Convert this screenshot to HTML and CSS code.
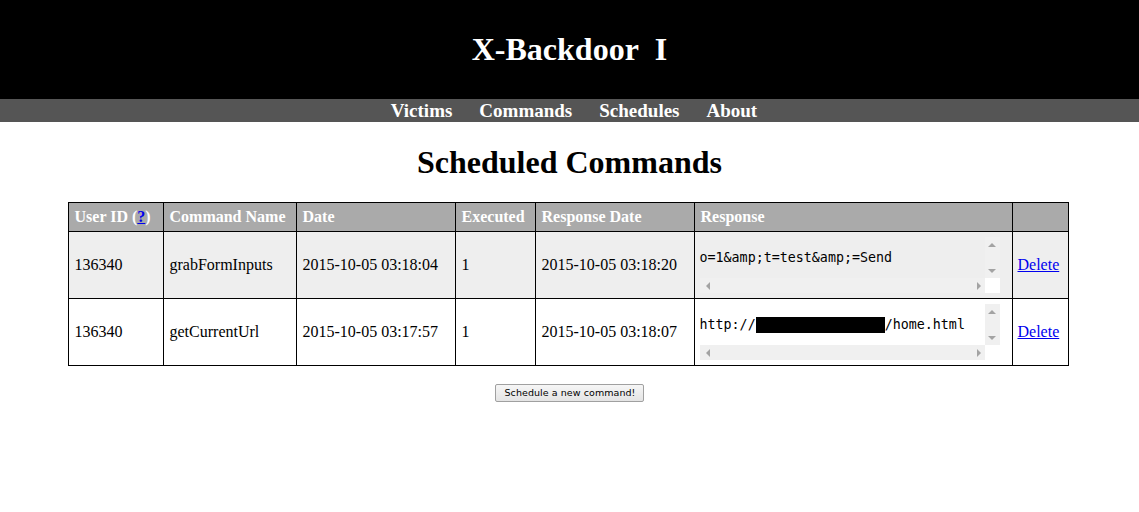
FILE: index.html
```html
<!DOCTYPE html>
<html>
<head>
<meta charset="utf-8">
<title>X-Backdoor I</title>
<link rel="stylesheet" href="styles.css">
</head>
<body>
<div class="header"><h1 class="title">X-Backdoor&nbsp; I</h1></div>
<div class="nav">
  <a href="#">Victims</a>
  <a href="#">Commands</a>
  <a href="#">Schedules</a>
  <a href="#">About</a>
</div>
<h2 class="page-title">Scheduled Commands</h2>
<div class="table-wrap">
<table class="grid">
  <colgroup>
    <col class="c1"><col class="c2"><col class="c3"><col class="c4"><col class="c5"><col class="c6"><col class="c7">
  </colgroup>
  <thead>
    <tr>
      <th>User ID (<a class="help" href="#">?</a>)</th>
      <th>Command Name</th>
      <th>Date</th>
      <th>Executed</th>
      <th>Response Date</th>
      <th>Response</th>
      <th></th>
    </tr>
  </thead>
  <tbody>
    <tr class="odd">
      <td>136340</td>
      <td>grabFormInputs</td>
      <td>2015-10-05 03:18:04</td>
      <td>1</td>
      <td>2015-10-05 03:18:20</td>
      <td class="resp">
        <div class="response-box">
          <div class="response-line">o=1&amp;amp;t=test&amp;amp;=Send</div>
          <div class="vbar"><span class="arr up"></span><span class="arr down"></span></div>
          <div class="hbar"><span class="arr left"></span><span class="arr right"></span></div>
          <div class="corner"></div>
        </div>
      </td>
      <td class="del-cell"><a class="del" href="#">Delete</a></td>
    </tr>
    <tr>
      <td>136340</td>
      <td>getCurrentUrl</td>
      <td>2015-10-05 03:17:57</td>
      <td>1</td>
      <td>2015-10-05 03:18:07</td>
      <td class="resp">
        <div class="response-box">
          <div class="response-line">http://<span class="redact"></span>/home.html</div>
          <div class="vbar"><span class="arr up"></span><span class="arr down"></span></div>
          <div class="hbar"><span class="arr left"></span><span class="arr right"></span></div>
          <div class="corner"></div>
        </div>
      </td>
      <td class="del-cell"><a class="del" href="#">Delete</a></td>
    </tr>
  </tbody>
</table>
</div>
<div class="actions"><button class="btn" type="button">Schedule a new command!</button></div>
</body>
</html>
```

FILE: styles.css
```css
html, body {
  margin: 0;
  padding: 0;
  background: #fff;
  font-family: "Liberation Serif", "Times New Roman", serif;
  font-size: 16px;
  color: #000;
}

.header {
  background: #000;
  height: 99px;
  display: flex;
  align-items: center;
  justify-content: center;
}

.title {
  margin: 0;
  color: #fff;
  font-size: 32px;
  font-weight: bold;
  line-height: 1;
  padding-bottom: 2px;
}

.nav {
  background: #555;
  height: 23px;
  display: flex;
  justify-content: center;
  align-items: center;
  gap: 27px;
  padding-left: 9px;
}

.nav a {
  color: #fff;
  font-weight: bold;
  font-size: 19px;
  text-decoration: none;
  line-height: 23px;
}

.page-title {
  margin: 23px 0 22px;
  text-align: center;
  font-size: 32px;
  font-weight: bold;
  line-height: 35px;
}

.table-wrap {
  padding-right: 3px;
}

.grid {
  width: 1000px;
  margin: 0 auto;
  border-collapse: collapse;
  table-layout: fixed;
  border: 1px solid #000;
}

.c1 { width: 95px; }
.c2 { width: 133px; }
.c3 { width: 159px; }
.c4 { width: 80px; }
.c5 { width: 159px; }
.c6 { width: 318px; }
.c7 { width: 56px; }

.grid th {
  background: #aaa;
  color: #fff;
  font-weight: bold;
  text-align: left;
  height: 29px;
  padding: 0 5px 0 6px;
  border: 1px solid #000;
  box-sizing: border-box;
}

.grid td {
  height: 67px;
  padding: 0 5px 0 6px;
  border: 1px solid #000;
  box-sizing: border-box;
  vertical-align: middle;
}

.grid tr.odd td {
  background: #eee;
}

.help {
  color: #00e;
  text-decoration: underline;
}

.grid td.resp {
  padding-left: 5px;
}

.grid td.del-cell {
  padding-left: 5px;
}

.response-box {
  width: 300px;
  height: 56px;
  display: grid;
  grid-template-columns: 285px 15px;
  grid-template-rows: 41px 15px;
}

.response-line {
  font-family: "DejaVu Sans Mono", monospace;
  font-size: 13.333px;
  line-height: 16px;
  padding-top: 13px;
  white-space: pre;
  display: flex;
  align-items: flex-start;
}

.redact {
  display: inline-block;
  width: 129px;
  height: 16px;
  background: #000;
}

.vbar {
  background: #f0f0f0;
  display: flex;
  flex-direction: column;
  align-items: center;
  justify-content: space-between;
  padding: 6px 0 5px;
}

.hbar {
  background: #f0f0f0;
  display: flex;
  align-items: center;
  justify-content: space-between;
  padding: 0 4px 0 6px;
}

.corner {
  background: #fff;
}

.arr {
  display: block;
  width: 0;
  height: 0;
}

.arr.up {
  border-left: 4px solid transparent;
  border-right: 4px solid transparent;
  border-bottom: 4px solid #a3a3a3;
}

.arr.down {
  border-left: 4px solid transparent;
  border-right: 4px solid transparent;
  border-top: 4px solid #a3a3a3;
}

.arr.left {
  border-top: 4px solid transparent;
  border-bottom: 4px solid transparent;
  border-right: 4px solid #a3a3a3;
}

.arr.right {
  border-top: 4px solid transparent;
  border-bottom: 4px solid transparent;
  border-left: 4px solid #a3a3a3;
}

.del {
  color: #00e;
  text-decoration: underline;
}

.actions {
  text-align: center;
  margin-top: 16px;
}

.btn {
  font-family: "DejaVu Sans", Verdana, sans-serif;
  font-size: 9.5px;
  letter-spacing: 0.07px;
  padding: 2px 7px 2px 8px;
  height: 18px;
  line-height: 12px;
  background: linear-gradient(#f6f6f6, #e4e4e4);
  border: 1px solid #a0a0a0;
  border-radius: 2px;
  color: #000;
}
```
